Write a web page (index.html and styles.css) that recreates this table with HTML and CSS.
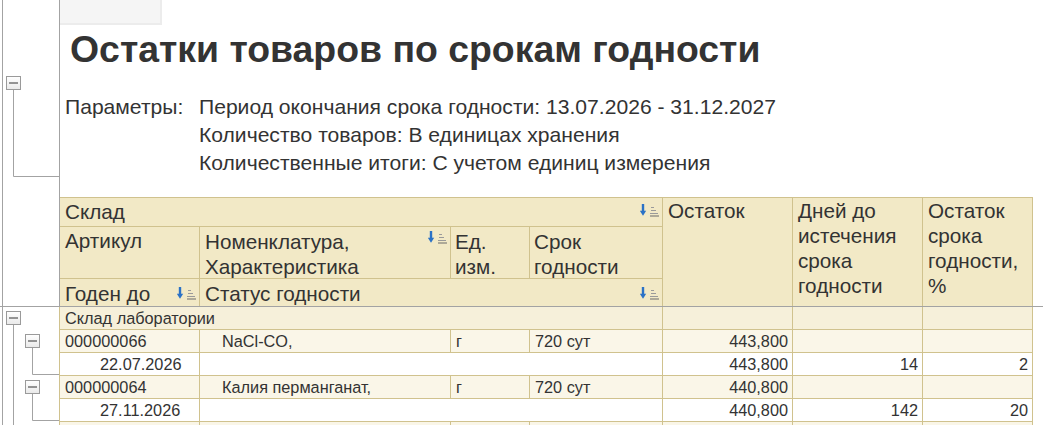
FILE: index.html
```html
<!DOCTYPE html>
<html lang="ru">
<head>
<meta charset="utf-8">
<title>Остатки товаров по срокам годности</title>
<link rel="stylesheet" href="styles.css">
</head>
<body>
<div class="page">
  <svg class="gutter" width="60" height="425" viewBox="0 0 60 425">
    <defs>
      <linearGradient id="bx" x1="0" y1="0" x2="0" y2="1">
        <stop offset="0" stop-color="#ffffff"/>
        <stop offset="1" stop-color="#e9e9e9"/>
      </linearGradient>
    </defs>
    <g stroke="#a3a3a3" stroke-width="1" fill="none">
      <path d="M2.5 0V425"/>
      <path d="M59.5 0V306"/>
      <path d="M0 306.5H60"/>
      <path d="M13.5 89V176.5H59"/>
      <path d="M13.5 324V425"/>
      <path d="M32.5 347V374.5H59"/>
      <path d="M32.5 393V420.5H59"/>
    </g>
    <path d="M59.5 307V425" stroke="#d0c28e" stroke-width="1"/>
    <g stroke="#9a9a9a" stroke-width="1" fill="url(#bx)">
      <rect x="6.5" y="76.5" width="14" height="13"/>
      <rect x="6.5" y="311.5" width="14" height="13"/>
      <rect x="25.5" y="334.5" width="14" height="13"/>
      <rect x="25.5" y="380.5" width="14" height="13"/>
    </g>
    <g stroke="#333" stroke-width="1">
      <path d="M9 83H18"/>
      <path d="M9 318H18"/>
      <path d="M28 341H37"/>
      <path d="M28 387H37"/>
    </g>
  </svg>

  <div class="main">
    <div class="tab-stub"></div>
    <h1 class="title">Остатки товаров по срокам годности</h1>

    <div class="params">
      <div class="params-label">Параметры:</div>
      <div class="params-values">
        <div>Период окончания срока годности: 13.07.2026 - 31.12.2027</div>
        <div>Количество товаров: В единицах хранения</div>
        <div>Количественные итоги: С учетом единиц измерения</div>
      </div>
    </div>

    <div class="report">
      <div class="thead-wrap">
        <div class="grid thead">
          <div class="hc h-sklad"><span>Склад</span>
            <svg class="sort" width="20" height="13" viewBox="0 0 20 13"><path d="M3 0V8" stroke="#2b72c6" stroke-width="2.4"/><path d="M-0.2 6.8L3 11.8L6.2 6.8Z" fill="#2b72c6"/><path d="M11 3.5H14M11 6.5H16M10 9.5H18" stroke="#9a9a9a"/><path d="M10 12H19" stroke="#6a6a6a"/></svg>
          </div>
          <div class="hc h-art">Артикул</div>
          <div class="hc h-nom"><span>Номенклатура,<br>Характеристика</span>
            <svg class="sort" width="20" height="13" viewBox="0 0 20 13"><path d="M3 0V8" stroke="#2b72c6" stroke-width="2.4"/><path d="M-0.2 6.8L3 11.8L6.2 6.8Z" fill="#2b72c6"/><path d="M11 3.5H14M11 6.5H16M10 9.5H18" stroke="#9a9a9a"/><path d="M10 12H19" stroke="#6a6a6a"/></svg>
          </div>
          <div class="hc h-ed">Ед.<br>изм.</div>
          <div class="hc h-srok">Срок<br>годности</div>
          <div class="hc h-ost">Остаток</div>
          <div class="hc h-dney">Дней до<br>истечения<br>срока<br>годности</div>
          <div class="hc h-proc">Остаток<br>срока<br>годности,<br>%</div>
          <div class="hc h-goden"><span>Годен до</span>
            <svg class="sort sort-low" width="20" height="13" viewBox="0 0 20 13"><path d="M3 0V8" stroke="#2b72c6" stroke-width="2.4"/><path d="M-0.2 6.8L3 11.8L6.2 6.8Z" fill="#2b72c6"/><path d="M11 3.5H14M11 6.5H16M10 9.5H18" stroke="#9a9a9a"/><path d="M10 12H19" stroke="#6a6a6a"/></svg>
          </div>
          <div class="hc h-status"><span>Статус годности</span>
            <svg class="sort sort-low" width="20" height="13" viewBox="0 0 20 13"><path d="M3 0V8" stroke="#2b72c6" stroke-width="2.4"/><path d="M-0.2 6.8L3 11.8L6.2 6.8Z" fill="#2b72c6"/><path d="M11 3.5H14M11 6.5H16M10 9.5H18" stroke="#9a9a9a"/><path d="M10 12H19" stroke="#6a6a6a"/></svg>
          </div>
        </div>
      </div>

      <div class="grid tbody">
        <div class="dc grp span4">Склад лаборатории</div>
        <div class="dc grp"></div>
        <div class="dc grp"></div>
        <div class="dc grp"></div>

        <div class="dc itm">000000066</div>
        <div class="dc itm nom">NaCl-CO,</div>
        <div class="dc itm">г</div>
        <div class="dc itm">720 сут</div>
        <div class="dc itm num">443,800</div>
        <div class="dc itm"></div>
        <div class="dc itm"></div>

        <div class="dc det date">22.07.2026</div>
        <div class="dc det span3"></div>
        <div class="dc det num">443,800</div>
        <div class="dc det num">14</div>
        <div class="dc det num">2</div>

        <div class="dc itm">000000064</div>
        <div class="dc itm nom">Калия перманганат,</div>
        <div class="dc itm">г</div>
        <div class="dc itm">720 сут</div>
        <div class="dc itm num">440,800</div>
        <div class="dc itm"></div>
        <div class="dc itm"></div>

        <div class="dc det date">27.11.2026</div>
        <div class="dc det span3"></div>
        <div class="dc det num">440,800</div>
        <div class="dc det num">142</div>
        <div class="dc det num">20</div>

        <div class="dc itm"></div>
        <div class="dc itm"></div>
        <div class="dc itm"></div>
        <div class="dc itm"></div>
        <div class="dc itm"></div>
        <div class="dc itm"></div>
        <div class="dc itm"></div>
      </div>
    </div>
  </div>
</div>
</body>
</html>
```

FILE: styles.css
```css
* { box-sizing: border-box; }

body {
  margin: 0;
  background: #ffffff;
  color: #333333;
  font-family: "Liberation Sans", Arial, sans-serif;
}

.page {
  display: flex;
  height: 425px;
  overflow: hidden;
}

.gutter {
  flex: 0 0 60px;
  display: block;
}

.main {
  flex: 1;
  min-width: 0;
}

.tab-stub {
  width: 102px;
  height: 25px;
  background: #f5f5f5;
  border-right: 2px solid #ececec;
  border-bottom: 2px solid #ececec;
}

.title {
  margin: 2px 0 0 10px;
  font-size: 37.4px;
  line-height: 44px;
  font-weight: bold;
  color: #333333;
  white-space: nowrap;
}

.params {
  display: grid;
  grid-template-columns: 134px auto;
  margin-top: 22px;
  padding-left: 5px;
  font-size: 21.1px;
  line-height: 28px;
  white-space: nowrap;
}

.report {
  margin-top: 20px;
}

.thead-wrap {
  border-bottom: 1px solid #a3a3a3;
}

.grid {
  display: grid;
  grid-template-columns: 139px 250px 78px 132px 129px 129px 109px;
  gap: 1px;
  width: max-content;
  padding-right: 1px;
  background: #d0c28e;
}

.thead {
  padding-top: 1px;
  grid-template-rows: 28px 51px 27px;
}

.tbody {
  grid-auto-rows: 22px;
}

.hc {
  background: #f2e9c6;
  font-size: 20.7px;
  line-height: 25px;
  padding: 1px 2px 0 5px;
  display: flex;
  justify-content: space-between;
  align-items: flex-start;
  white-space: nowrap;
}

.sort {
  flex: none;
  margin-top: 5px;
}

.sort-low {
  margin-top: 6px;
}

.h-sklad { grid-column: 1 / 5; grid-row: 1; }
.h-art { grid-column: 1; grid-row: 2; }
.h-nom { grid-column: 2; grid-row: 2; padding-top: 2px; }
.h-nom .sort { margin-top: 2px; }
.h-ed { grid-column: 3; grid-row: 2; padding-left: 4px; padding-top: 2px; }
.h-srok { grid-column: 4; grid-row: 2; padding-left: 4px; padding-top: 2px; }
.h-ost { grid-column: 5; grid-row: 1 / 4; padding-top: 0; }
.h-dney { grid-column: 6; grid-row: 1 / 4; padding-top: 0; }
.h-proc { grid-column: 7; grid-row: 1 / 4; padding-top: 0; }
.h-goden { grid-column: 1; grid-row: 3; padding-top: 2px; }
.h-status { grid-column: 2 / 5; grid-row: 3; padding-top: 2px; }

.dc {
  font-size: 16.3px;
  line-height: 22px;
  padding: 0 4px 0 5px;
  white-space: nowrap;
  overflow: hidden;
}

.grp { background: #f6f0da; }
.itm { background: #faf6e8; }
.det { background: #ffffff; }

.span4 { grid-column: span 4; }
.span3 { grid-column: span 3; }

.num { text-align: right; }
.nom { padding-left: 22px; }
.date { padding-left: 40px; }
```
